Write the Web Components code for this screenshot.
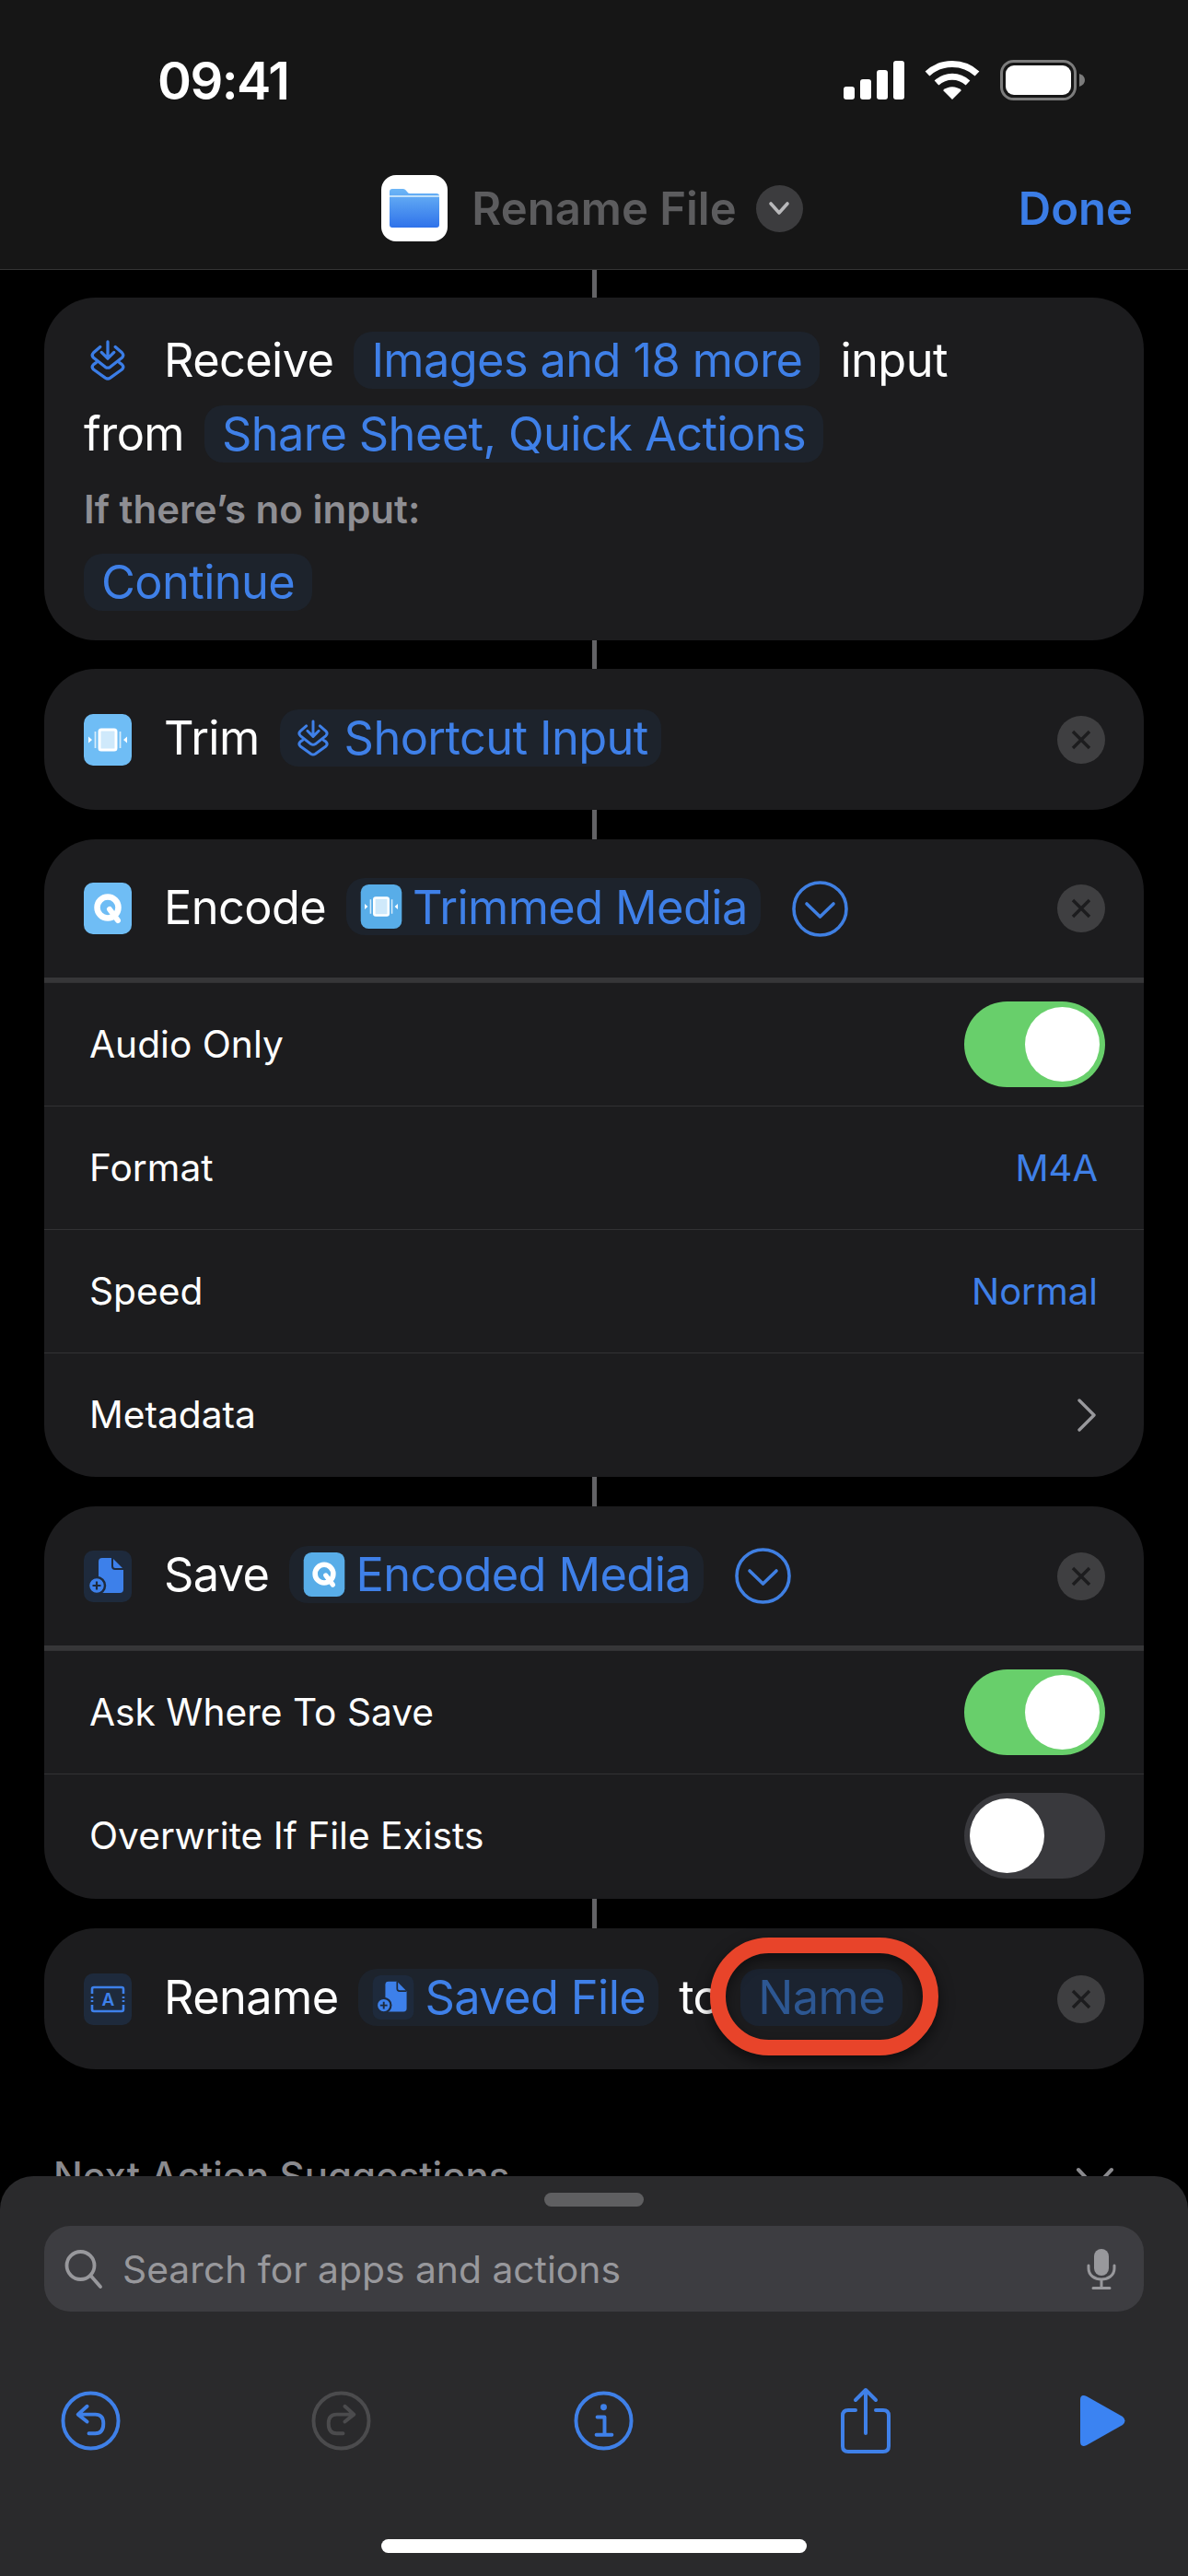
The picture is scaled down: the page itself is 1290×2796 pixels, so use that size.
<!DOCTYPE html>
<html lang="en">
<head>
<meta charset="utf-8">
<title>Rename File</title>
<style>
    html, body{
        margin: 0;
        padding: 0;
        background: #000;
    }
    body{
        width: 1290px;
        height: 2796px;
        overflow: hidden;
        font-family: Inter, "Liberation Sans", sans-serif;
        color: #fff;
    }
</style>
</head>
<body>
<shortcut-editor>
    <status-bar slot="top"></status-bar>
    <nav-bar slot="top" title="Rename File"></nav-bar>

    <flow-link size="30"></flow-link>

    <action-card>
        <action-line icon="input"><span>Receive</span><var-pill>Images and 18 more</var-pill><span>input</span></action-line>
        <action-line><span>from</span><var-pill>Share Sheet, Quick Actions</var-pill></action-line>
        <action-note>If there’s no input:</action-note>
        <action-line><var-pill>Continue</var-pill></action-line>
    </action-card>

    <flow-link size="31"></flow-link>

    <action-card single>
        <action-line icon="trim" closable><span>Trim</span><var-pill icon="input">Shortcut Input</var-pill></action-line>
    </action-card>

    <flow-link></flow-link>

    <action-card single expanded>
        <action-line icon="encode" closable more><span>Encode</span><var-pill icon="trim">Trimmed Media</var-pill></action-line>
        <param-row slot="rows">Audio Only<toggle-switch slot="end" on></toggle-switch></param-row>
        <param-row slot="rows">Format<param-value slot="end">M4A</param-value></param-row>
        <param-row slot="rows">Speed<param-value slot="end">Normal</param-value></param-row>
        <param-row slot="rows">Metadata<row-chevron slot="end"></row-chevron></param-row>
    </action-card>

    <flow-link></flow-link>

    <action-card single expanded style="--head-height:151px;--rows-end:2px">
        <action-line icon="save" closable more><span>Save</span><var-pill icon="encode">Encoded Media</var-pill></action-line>
        <param-row slot="rows">Ask Where To Save<toggle-switch slot="end" on></toggle-switch></param-row>
        <param-row slot="rows">Overwrite If File Exists<toggle-switch slot="end"></toggle-switch></param-row>
    </action-card>

    <flow-link></flow-link>

    <action-card single>
        <action-line icon="rename" closable><span>Rename</span><var-pill icon="save">Saved File</var-pill><span>to</span><callout-ring><var-pill dim>Name</var-pill></callout-ring></action-line>
    </action-card>

    <next-suggestions>Next Action Suggestions</next-suggestions>

    <action-sheet slot="bottom"></action-sheet>
</shortcut-editor>

<script>
const BLUE = "#3b7de6";

const ICONS = {
    input: `<svg viewBox="0 0 44 48" fill="none" stroke="currentColor" stroke-width="3.6" stroke-linecap="round" stroke-linejoin="round">
        <path d="M22 2V21M14.500 14.500L22 22L29.500 14.500"/>
        <path d="M13 8L5 15Q2 18 5 21L19 32Q22 34 25 32L39 21Q42 18 39 15L31 8"/>
        <path d="M8 27L5 29Q2 32 5 35L19 45Q22 47 25 45L39 35Q42 32 39 29L36 27"/>
    </svg>`,
    trim: `<svg viewBox="0 0 52 56">
        <rect width="52" height="56" rx="10" fill="var(--tile, #6fbdf5)"/>
        <rect x="17" y="17" width="18" height="22" rx="2" fill="#cfe9fb" stroke="#fff" stroke-width="3"/>
        <path d="M12.500 19V37M39.500 19V37" stroke="#d5ecfb" stroke-width="1.800"/>
        <path d="M5 24.500L9 28L5 31.500ZM47 24.500L43 28L47 31.500Z" fill="#fff"/>
    </svg>`,
    encode: `<svg viewBox="0 0 52 56">
        <rect width="52" height="56" rx="10" fill="var(--tile, #6fbdf5)"/>
        <circle cx="26" cy="27" r="11.500" fill="none" stroke="#fff" stroke-width="6.500"/>
        <path d="M28 29L37 41" stroke="#fff" stroke-width="6" stroke-linecap="round"/>
    </svg>`,
    save: `<svg viewBox="0 0 52 56">
        <rect class="plate" width="52" height="56" rx="10" fill="#1e2a3c"/>
        <path d="M20 8H31L43 20V42Q43 46 39 46H20Q16 46 16 42V12Q16 8 20 8Z" fill="#3d80ea"/>
        <path d="M31 8V17Q31 20 34 20H43" fill="none" stroke="#1e2a3c" stroke-width="2"/>
        <circle cx="14" cy="38" r="9" fill="#3d80ea" stroke="#1e2a3c" stroke-width="2.500"/>
        <path d="M14 33.500V42.500M9.500 38H18.500" stroke="#1e2a3c" stroke-width="2.200"/>
    </svg>`,
    rename: `<svg viewBox="0 0 52 56">
        <rect width="52" height="56" rx="10" fill="#1e2a3c"/>
        <path d="M9 22V17Q9 15 11 15H41Q43 15 43 17V22M9 34V39Q9 41 11 41H41Q43 41 43 39V34" fill="none" stroke="#3d80ea" stroke-width="2.600"/>
        <path d="M9 25V31M43 25V31" stroke="#3d80ea" stroke-width="2.600" stroke-dasharray="2 2"/>
        <text x="26" y="35" text-anchor="middle" font-family="Inter, sans-serif" font-size="19" font-weight="600" fill="#3d80ea">A</text>
    </svg>`,
    files: `<svg viewBox="0 0 72 72">
        <defs><linearGradient id="folder" x1="0" y1="0" x2="0" y2="1"><stop offset="0" stop-color="#6cb6f6"/><stop offset="1" stop-color="#2f72ea"/></linearGradient></defs>
        <rect width="72" height="72" rx="16" fill="#fff"/>
        <path d="M9 18Q9 15 12 15H24Q26 15 28 18Q29 20 31 20H60Q63 20 63 23V54Q63 57 60 57H12Q9 57 9 54Z" fill="url(#folder)"/>
        <path d="M9 23H63" stroke="#bfe0fa" stroke-width="2"/>
    </svg>`
};

class StatusBar extends HTMLElement{
    connectedCallback(){
        this.root = this.attachShadow({mode : "open"});
        this.root.innerHTML = `
            <style>
                :host{
                    display: flex;
                    align-items: center;
                    justify-content: space-between;
                    height: 174px;
                    padding: 0 112px 0 171px;
                    box-sizing: border-box;
                }
                .time{
                    font-size: 56px;
                    font-weight: 600;
                    letter-spacing: -1.500px;
                    position: relative;
                    top: 1px;
                }
                .icons{
                    display: flex;
                    align-items: center;
                    gap: 22px;
                }
                svg{
                    display: block;
                }
            </style>
            <span class="time">09:41</span>
            <span class="icons">
                <svg width="66" height="42" viewBox="0 0 66 42" fill="#fff">
                    <rect x="0" y="28" width="12" height="14" rx="3"/>
                    <rect x="18" y="20" width="12" height="22" rx="3"/>
                    <rect x="36" y="10" width="12" height="32" rx="3"/>
                    <rect x="54" y="0" width="12" height="42" rx="3"/>
                </svg>
                <svg width="60" height="42" viewBox="0 0 60 42" fill="none" stroke="#fff" stroke-width="7">
                    <path d="M3 14C18 0 42 0 57 14"/>
                    <path d="M13 24C23 15 37 15 47 24"/>
                    <path d="M30 42L20 32C26 27 34 27 40 32Z" fill="#fff" stroke="none"/>
                </svg>
                <svg width="92" height="44" viewBox="0 0 92 44">
                    <rect x="1.500" y="1.500" width="80" height="41" rx="13" fill="none" stroke="#7c7c7c" stroke-width="3"/>
                    <rect x="6" y="6" width="71" height="32" rx="9" fill="#fff"/>
                    <path d="M86 15Q92 17 92 22Q92 27 86 29Z" fill="#7c7c7c"/>
                </svg>
            </span>
        `;
    }
}

class NavBar extends HTMLElement{
    connectedCallback(){
        this.root = this.attachShadow({mode : "open"});
        this.root.innerHTML = `
            <style>
                :host{
                    display: grid;
                    grid-template-columns: 1fr auto 1fr;
                    align-items: center;
                    height: 119px;
                    padding-bottom: 14px;
                    box-sizing: border-box;
                    border-bottom: 1px solid #343434;
                }
                .title{
                    grid-column: 2;
                    display: flex;
                    align-items: center;
                    gap: 26px;
                    margin-right: 4px;
                    color: #5c5c5e;
                    font-size: 49px;
                    font-weight: 600;
                    white-space: nowrap;
                }
                .title svg{
                    width: 72px;
                    height: 72px;
                    display: block;
                }
                .menu{
                    width: 51px;
                    height: 51px;
                    border-radius: 50%;
                    background: #3c3c3e;
                    display: flex;
                    align-items: center;
                    justify-content: center;
                    margin-left: -5px;
                }
                .done{
                    justify-self: end;
                    margin-right: 60px;
                    color: ${BLUE};
                    font-size: 49px;
                    font-weight: 600;
                }
            </style>
            <div class="title">
                ${ICONS.files}
                <span>${this.getAttribute("title")}</span>
                <span class="menu">
                    <svg style="width:24px;height:16px" viewBox="0 0 24 16" fill="none" stroke="#b9b9bb" stroke-width="3.600" stroke-linecap="round" stroke-linejoin="round"><path d="M3 3L12 13L21 3"/></svg>
                </span>
            </div>
            <span class="done">Done</span>
        `;
    }
}

class FlowLink extends HTMLElement{
    connectedCallback(){
        this.root = this.attachShadow({mode : "open"});
        this.root.innerHTML = `
            <style>
                :host{
                    display: block;
                    height: ${this.getAttribute("size") || 32}px;
                }
                .line{
                    width: 5px;
                    height: 100%;
                    margin: 0 auto;
                    background: #636366;
                }
            </style>
            <div class="line"></div>
        `;
    }
}

class ActionCard extends HTMLElement{
    connectedCallback(){
        this.root = this.attachShadow({mode : "open"});
        this.root.innerHTML = `
            <style>
                :host{
                    display: block;
                    margin: 0 48px;
                    background: #1c1c1e;
                    border-radius: 56px;
                    overflow: hidden;
                }
                .head{
                    display: flex;
                    flex-direction: column;
                    gap: 17px;
                    padding: 36px 43px 32px;
                }
                :host([single]) .head{
                    height: 153px;
                    box-sizing: border-box;
                    padding: 0 42px 0 43px;
                    justify-content: center;
                }
                :host([expanded]) .head{
                    height: var(--head-height, 150px);
                }
                .rows{
                    display: none;
                    border-top: 5px solid #363638;
                    padding-bottom: var(--rows-end, 1px);
                }
                :host([expanded]) .rows{
                    display: block;
                }
            </style>
            <div class="head"><slot></slot></div>
            <div class="rows"><slot name="rows"></slot></div>
        `;
    }
}

class ActionLine extends HTMLElement{
    connectedCallback(){
        const icon = this.getAttribute("icon");
        const bare = icon === "input";
        this.root = this.attachShadow({mode : "open"});
        this.root.innerHTML = `
            <style>
                :host{
                    display: flex;
                    align-items: center;
                    height: 63px;
                    color: #fff;
                    font-size: 50.500px;
                    font-weight: 400;
                    letter-spacing: -0.600px;
                    white-space: nowrap;
                }
                .icon{
                    flex: none;
                    width: 52px;
                    height: ${bare ? 46 : 56}px;
                    margin-right: 35px;
                    color: ${BLUE};
                    display: ${icon ? "block" : "none"};
                }
                :host([icon="input"]) .icon{
                    width: 40px;
                    margin: 0 41px 0 6px;
                }
                .content{
                    display: flex;
                    align-items: center;
                    gap: 22px;
                }
                :host([closable]) .content{
                    margin-bottom: 4px;
                }
                .more{
                    width: 61px;
                    height: 61px;
                    margin-left: 34px;
                    flex: none;
                    display: ${this.hasAttribute("more") ? "block" : "none"};
                }
                .close{
                    flex: none;
                    margin-left: auto;
                    width: 52px;
                    height: 52px;
                    border-radius: 50%;
                    background: #3f3f41;
                    display: ${this.hasAttribute("closable") ? "flex" : "none"};
                    align-items: center;
                    justify-content: center;
                }
                svg{
                    display: block;
                    width: 100%;
                    height: 100%;
                }
                .close svg{
                    width: 22px;
                    height: 22px;
                }
            </style>
            <span class="icon">${ICONS[icon] || ""}</span>
            <span class="content"><slot></slot></span>
            <span class="more">
                <svg viewBox="0 0 61 61" fill="none" stroke="#3f7fe2" stroke-width="3.600" stroke-linecap="round" stroke-linejoin="round">
                    <circle cx="30.500" cy="30.500" r="28.500"/>
                    <path d="M16 25L30.500 39L45 25"/>
                </svg>
            </span>
            <span class="close">
                <svg viewBox="0 0 22 22" fill="none" stroke="#1c1c1e" stroke-width="3.400"><path d="M2 2L20 20M20 2L2 20"/></svg>
            </span>
        `;
    }
}

class VarPill extends HTMLElement{
    connectedCallback(){
        const icon = this.getAttribute("icon");
        const bare = icon === "input";
        this.root = this.attachShadow({mode : "open"});
        this.root.innerHTML = `
            <style>
                :host{
                    display: inline-flex;
                    align-items: center;
                    gap: ${bare ? 16 : 10}px;
                    height: 62px;
                    padding: 0 ${icon ? 14 : 19}px 0 ${bare ? 18 : icon ? 14 : 19}px;
                    border-radius: 20px;
                    background: #1d232c;
                    color: #3f80e8;
                    --tile: #58ade8;
                }
                :host([dim]){
                    background: #1b2330;
                    color: #2d5792;
                }
                .icon{
                    display: ${icon ? "block" : "none"};
                    width: ${bare ? 36 : 48}px;
                    height: ${bare ? 40 : 48}px;
                }
                .icon svg{
                    display: block;
                    width: 100%;
                    height: 100%;
                }
            </style>
            <span class="icon">${ICONS[icon] || ""}</span>
            <span><slot></slot></span>
        `;
    }
}

class CalloutRing extends HTMLElement{
    connectedCallback(){
        this.root = this.attachShadow({mode : "open"});
        this.root.innerHTML = `
            <style>
                :host{
                    display: inline-block;
                    position: relative;
                }
                .ring{
                    position: absolute;
                    inset: -34px -39px -32px -33px;
                    border: 17px solid #e8442a;
                    border-radius: 64px;
                    box-shadow: 0 6px 16px rgba(0,0,0,.55), inset 0 6px 14px rgba(0,0,0,.45);
                }
            </style>
            <slot></slot>
            <div class="ring"></div>
        `;
    }
}

class ActionNote extends HTMLElement{
    connectedCallback(){
        this.root = this.attachShadow({mode : "open"});
        this.root.innerHTML = `
            <style>
                :host{
                    display: block;
                    color: #8e8e93;
                    font-size: 42px;
                    font-weight: 600;
                    line-height: 46px;
                    margin: 11px 0 7px;
                }
            </style>
            <slot></slot>
        `;
    }
}

class ParamRow extends HTMLElement{
    connectedCallback(){
        this.root = this.attachShadow({mode : "open"});
        this.root.innerHTML = `
            <style>
                :host{
                    display: flex;
                    align-items: center;
                    justify-content: space-between;
                    height: 134px;
                    box-sizing: border-box;
                    padding: 0 50px 0 49px;
                    border-top: 1px solid #323234;
                    color: #fff;
                    font-size: 40.700px;
                }
                :host(:first-child){
                    border-top: 0;
                }
            </style>
            <span><slot></slot></span>
            <slot name="end"></slot>
        `;
    }
}

class ParamValue extends HTMLElement{
    connectedCallback(){
        this.root = this.attachShadow({mode : "open"});
        this.root.innerHTML = `
            <style>
                :host{
                    display: block;
                    color: #3f80e8;
                    font-size: 40px;
                }
            </style>
            <slot></slot>
        `;
    }
}

class RowChevron extends HTMLElement{
    connectedCallback(){
        this.root = this.attachShadow({mode : "open"});
        this.root.innerHTML = `
            <style>
                :host{
                    display: block;
                    width: 24px;
                    height: 38px;
                }
                svg{
                    display: block;
                }
            </style>
            <svg width="24" height="38" viewBox="0 0 24 38" fill="none" stroke="#98989c" stroke-width="3.400" stroke-linecap="round" stroke-linejoin="round"><path d="M4 3L20 19L4 35"/></svg>
        `;
    }
}

class ToggleSwitch extends HTMLElement{
    connectedCallback(){
        this.root = this.attachShadow({mode : "open"});
        this.root.innerHTML = `
            <style>
                :host{
                    display: flex;
                    width: 153px;
                    height: 93px;
                    margin-right: -8px;
                    padding: 6px;
                    box-sizing: border-box;
                    border-radius: 47px;
                    background: #39393d;
                    justify-content: flex-start;
                }
                :host([on]){
                    background: #68cf6b;
                    justify-content: flex-end;
                }
                .knob{
                    width: 81px;
                    height: 81px;
                    border-radius: 50%;
                    background: #fff;
                }
            </style>
            <div class="knob"></div>
        `;
    }
}

class NextSuggestions extends HTMLElement{
    connectedCallback(){
        this.root = this.attachShadow({mode : "open"});
        this.root.innerHTML = `
            <style>
                :host{
                    display: flex;
                    align-items: center;
                    justify-content: space-between;
                    padding: 0 80px 0 58px;
                    margin-top: 90px;
                    height: 50px;
                    color: #8a8a8e;
                    font-size: 42px;
                    font-weight: 500;
                    white-space: nowrap;
                }
                svg{
                    display: block;
                    margin-top: 8px;
                }
            </style>
            <span><slot></slot></span>
            <svg width="42" height="26" viewBox="0 0 42 26" fill="none" stroke="#8a8a8e" stroke-width="4" stroke-linecap="round" stroke-linejoin="round"><path d="M3 3L21 22L39 3"/></svg>
        `;
    }
}

class SearchField extends HTMLElement{
    connectedCallback(){
        this.root = this.attachShadow({mode : "open"});
        this.root.innerHTML = `
            <style>
                :host{
                    display: flex;
                    align-items: center;
                    height: 93px;
                    margin: 0 48px;
                    padding: 0 30px 0 22px;
                    box-sizing: border-box;
                    border-radius: 28px;
                    background: #3d3d41;
                    color: #98989c;
                    font-size: 40.800px;
                    white-space: nowrap;
                }
                .label{
                    margin-left: 21px;
                    flex: 1;
                }
                svg{
                    display: block;
                    flex: none;
                }
            </style>
            <svg width="42" height="44" viewBox="0 0 42 44" fill="none" stroke="#98989c" stroke-width="3.800" stroke-linecap="round">
                <circle cx="17.500" cy="18" r="15"/>
                <path d="M28.500 29L39 41"/>
            </svg>
            <span class="label">Search for apps and actions</span>
            <svg width="32" height="44" viewBox="0 0 32 44" fill="none" stroke="#98989c" stroke-width="3" stroke-linecap="round">
                <rect x="8" y="0" width="16" height="29" rx="8" fill="#98989c" stroke="none"/>
                <path d="M2 18V21C2 37 30 37 30 21V18"/>
                <path d="M16 34V42M7 42.500H25"/>
            </svg>
        `;
    }
}

class ToolBar extends HTMLElement{
    connectedCallback(){
        this.root = this.attachShadow({mode : "open"});
        this.root.innerHTML = `
            <style>
                :host{
                    display: flex;
                    align-items: center;
                    padding-left: 66px;
                    height: 76px;
                    margin-top: 80px;
                    color: #3f80e8;
                }
                svg{
                    display: block;
                    flex: none;
                }
                .redo{
                    margin-left: 207px;
                }
                .info{
                    margin-left: 220px;
                }
                .share{
                    margin-left: 224px;
                }
                .play{
                    margin-left: 205px;
                }
            </style>
            <svg width="65" height="65" viewBox="0 0 66 66" fill="none" stroke="currentColor" stroke-width="4" stroke-linecap="round" stroke-linejoin="round">
                <circle cx="33" cy="33" r="30.500"/>
                <path d="M29 17L19 26L29 34M20 26H38Q47 26 47 36Q47 47 38 47H31"/>
            </svg>
            <svg class="redo" width="65" height="65" viewBox="0 0 66 66" fill="none" stroke="#4b4b4d" stroke-width="4" stroke-linecap="round" stroke-linejoin="round">
                <circle cx="33" cy="33" r="30.500"/>
                <path d="M37 17L47 26L37 34M46 26H28Q19 26 19 36Q19 47 28 47H35"/>
            </svg>
            <svg class="info" width="65" height="65" viewBox="0 0 66 66" fill="none" stroke="currentColor" stroke-width="4" stroke-linecap="round" stroke-linejoin="round">
                <circle cx="33" cy="33" r="30.500"/>
                <circle cx="33" cy="18" r="3.500" fill="currentColor" stroke="none"/>
                <path d="M26 29H34V48M25 48.500H42"/>
            </svg>
            <svg class="share" width="56" height="73" viewBox="0 0 56 73" fill="none" stroke="currentColor" stroke-width="4" stroke-linecap="round" stroke-linejoin="round">
                <path d="M17 25H9Q3 25 3 31V64Q3 70 9 70H47Q53 70 53 64V31Q53 25 47 25H39"/>
                <path d="M28 50V3M17 14L28 3L39 14"/>
            </svg>
            <svg class="play" width="50" height="55" viewBox="0 0 50 55" fill="#3b83f2">
                <path d="M0 5Q0 -2 7 1L46 23Q51 27.500 46 32L7 54Q0 57 0 50Z"/>
            </svg>
        `;
    }
}

class ActionSheet extends HTMLElement{
    connectedCallback(){
        this.root = this.attachShadow({mode : "open"});
        this.root.innerHTML = `
            <style>
                :host{
                    display: block;
                    height: 434px;
                    background: #2a2a2c;
                    border-radius: 36px 36px 0 0;
                    padding-top: 18px;
                    box-sizing: border-box;
                }
                .handle{
                    width: 108px;
                    height: 15px;
                    margin: 0 auto 21px;
                    border-radius: 8px;
                    background: #5f5f61;
                }
                .home{
                    width: 462px;
                    height: 15px;
                    margin: 91px auto 0;
                    border-radius: 8px;
                    background: #fff;
                }
            </style>
            <div class="handle"></div>
            <search-field></search-field>
            <tool-bar></tool-bar>
            <div class="home"></div>
        `;
    }
}

class ShortcutEditor extends HTMLElement{
    connectedCallback(){
        this.root = this.attachShadow({mode : "open"});
        this.root.innerHTML = `
            <style>
                :host{
                    display: flex;
                    flex-direction: column;
                    height: 2796px;
                }
                .top{
                    background: #161616;
                }
                .flow{
                    flex: 1;
                    min-height: 0;
                    overflow: hidden;
                }
            </style>
            <div class="top"><slot name="top"></slot></div>
            <div class="flow"><slot></slot></div>
            <slot name="bottom"></slot>
        `;
    }
}

customElements.define("status-bar", StatusBar);
customElements.define("nav-bar", NavBar);
customElements.define("flow-link", FlowLink);
customElements.define("action-card", ActionCard);
customElements.define("action-line", ActionLine);
customElements.define("var-pill", VarPill);
customElements.define("callout-ring", CalloutRing);
customElements.define("action-note", ActionNote);
customElements.define("param-row", ParamRow);
customElements.define("param-value", ParamValue);
customElements.define("row-chevron", RowChevron);
customElements.define("toggle-switch", ToggleSwitch);
customElements.define("next-suggestions", NextSuggestions);
customElements.define("search-field", SearchField);
customElements.define("tool-bar", ToolBar);
customElements.define("action-sheet", ActionSheet);
customElements.define("shortcut-editor", ShortcutEditor);
</script>
</body>
</html>
